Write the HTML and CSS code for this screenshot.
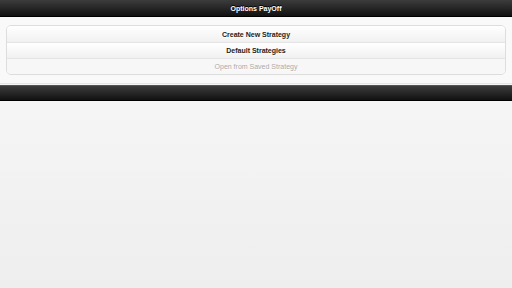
FILE: index.html
```html
<!DOCTYPE html>
<html lang="en">
<head>
  <meta charset="UTF-8" />
  <title>Options PayOff</title>
  <link rel="stylesheet" href="styles.css">
</head>
<body>
  <div class="pagina">
    <div class="cabecera">
      <h1>Options PayOff</h1>
    </div>

    <div class="contenido">
      <ul class="lista">
        <li class="opcion">Create New Strategy</li>
        <li class="opcion">Default Strategies</li>
        <li class="opcion desactivada">Open from Saved Strategy</li>
      </ul>
    </div>

    <div class="pie"></div>
  </div>
</body>
</html>
```

FILE: styles.css
```css
body {
  font-family: 'Liberation Sans', Arial, sans-serif;
  margin: 0;
  width: 512px;
  height: 288px;
  overflow: hidden;
  background: linear-gradient(#f9f9f9, #eeeeee);
  color: #222;
}
.cabecera {
  height: 16px;
  background: linear-gradient(#3c3c3c, #111111);
  border-bottom: 1px solid #000;
  display: flex;
  align-items: center;
  justify-content: center;
}
.cabecera h1 {
  margin: 0;
  font-size: 7px;
  font-weight: bold;
  color: #fff;
  text-shadow: 0 -1px 0 #000;
}
.contenido {
  background: #f9f9f9;
  padding: 8px 6px 8px 6px;
  border-bottom: 1px solid #e6e6e6;
}
.lista {
  list-style: none;
  margin: 0;
  padding: 0;
  border: 1px solid #dddddd;
  border-radius: 5px;
  overflow: hidden;
}
.opcion {
  height: 15px;
  display: flex;
  align-items: center;
  justify-content: center;
  font-size: 7px;
  font-weight: bold;
  color: #222;
  background: linear-gradient(#ffffff, #f1f1f1);
  border-top: 1px solid #e4e4e4;
  text-shadow: 0 1px 0 #fff;
}
.opcion:first-child {
  height: 16px;
  border-top: none;
}
.desactivada {
  color: #aaaaaa;
  font-weight: normal;
  background: #f7f7f7;
}
.pie {
  margin-top: 1px;
  height: 14px;
  background: linear-gradient(#3c3c3c, #111111);
  border-top: 1px solid #555;
  border-bottom: 1px solid #000;
}
```
